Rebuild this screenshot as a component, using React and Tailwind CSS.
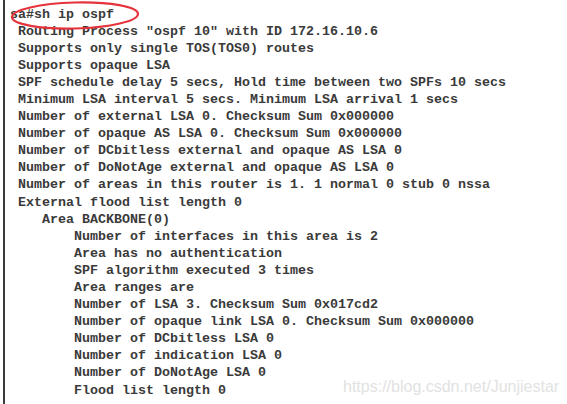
import React from 'react';

const lines = [
  'sa#sh ip ospf',
  ' Routing Process "ospf 10" with ID 172.16.10.6',
  ' Supports only single TOS(TOS0) routes',
  ' Supports opaque LSA',
  ' SPF schedule delay 5 secs, Hold time between two SPFs 10 secs',
  ' Minimum LSA interval 5 secs. Minimum LSA arrival 1 secs',
  ' Number of external LSA 0. Checksum Sum 0x000000',
  ' Number of opaque AS LSA 0. Checksum Sum 0x000000',
  ' Number of DCbitless external and opaque AS LSA 0',
  ' Number of DoNotAge external and opaque AS LSA 0',
  ' Number of areas in this router is 1. 1 normal 0 stub 0 nssa',
  ' External flood list length 0',
  '    Area BACKBONE(0)',
  '        Number of interfaces in this area is 2',
  '        Area has no authentication',
  '        SPF algorithm executed 3 times',
  '        Area ranges are',
  '        Number of LSA 3. Checksum Sum 0x017cd2',
  '        Number of opaque link LSA 0. Checksum Sum 0x000000',
  '        Number of DCbitless LSA 0',
  '        Number of indication LSA 0',
  '        Number of DoNotAge LSA 0',
  '        Flood list length 0',
];

export default function App() {
  return (
    <div className="relative w-[567px] h-[404px] overflow-hidden bg-white">
      <div className="h-full ml-[3px] border-l-2 border-[#3a3a3a] pl-[5px] pt-[5.5px]">
        <pre className="font-['Liberation_Mono','Courier_New',monospace] font-bold text-[13.33px] leading-[17.1px] text-[#3a3a3a]">
          {lines.map((l, i) => (
            <div key={i} className="whitespace-pre">{l}</div>
          ))}
        </pre>
      </div>

      {/* red marker ring around the command */}
      <svg className="absolute left-0 top-0" width="160" height="36" viewBox="0 0 160 36">
        <ellipse cx="75" cy="15.5" rx="63" ry="13" fill="none" stroke="#e5323b" strokeWidth="2.2" transform="rotate(-1.5 75 15.5)" />
      </svg>

      {/* watermark */}
      <div className="absolute left-[343px] top-[377px] font-['Liberation_Sans',Arial,sans-serif] text-[16px] leading-[20px] text-[#e2e2e2]">
        https://blog.csdn.net/Junjiestar
      </div>
    </div>
  );
}
